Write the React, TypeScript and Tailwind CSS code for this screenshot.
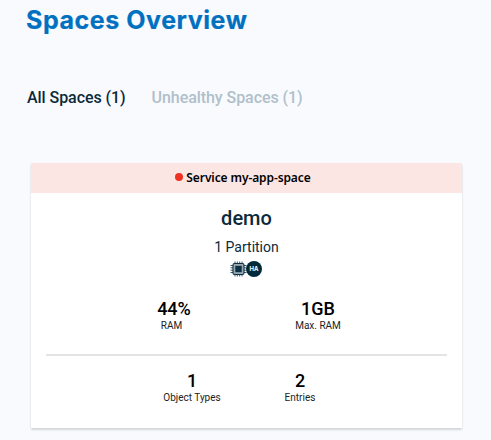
function ChipIcon() {
  return (
    <svg width="17" height="16" viewBox="0 0 17 16" fill="none" stroke="#0b3044">
      <path
        d="M5 .5v15M7.3 .5v15M9.7 .5v15M12 .5v15M.5 4.5h16M.5 6.8h16M.5 9.2h16M.5 11.5h16"
        strokeWidth="1"
        strokeOpacity="0.8"
      />
      <rect x="3" y="2.5" width="11" height="11" rx="1.5" fill="#9aabb5" strokeWidth="1.1" />
      <rect x="5.3" y="4.8" width="6.4" height="6.4" fill="#0b3044" stroke="none" />
    </svg>
  );
}

type StatProps = { value: string; label: string; className: string; labelClass?: string };

function Stat({ value, label, className, labelClass = "" }: StatProps) {
  return (
    <div className={`text-center whitespace-nowrap ${className}`}>
      <div className="text-[18px] leading-[20px] font-medium text-black">{value}</div>
      <div className={`mt-px text-[10px] leading-[12px] text-[#222] ${labelClass}`}>{label}</div>
    </div>
  );
}

export default function App() {
  return (
    <main className="h-[440px] w-[491px] overflow-hidden bg-[#f9fafe] font-['Roboto',sans-serif] text-[#0b2a3a]">
      <h1 className="pt-[4px] pl-[26px] font-['Inter',sans-serif] text-[25px] leading-[32px] font-bold tracking-[0.55px] whitespace-nowrap text-[#0070c0] [-webkit-text-stroke:0.2px]">
        Spaces Overview
      </h1>
      <nav className="mt-[52px] flex gap-[26px] pl-[27px] text-[16px] leading-[20px] font-medium tracking-[-0.06px] whitespace-nowrap">
        <span>All Spaces (1)</span>
        <span className="text-[#afc0ca]">Unhealthy Spaces (1)</span>
      </nav>
      <section className="mt-[55px] ml-[31px] h-[265px] w-[431px] bg-white shadow-[0_2px_2px_rgba(0,0,0,0.12),0_1px_2px_rgba(0,0,0,0.05)]">
        <header className="flex h-[30px] items-center justify-center gap-[3px] bg-[#fbe6e4] pr-[7px]">
          <span className="-mt-[2px] size-[8px] rounded-full bg-[#ee3224]" />
          <span className="font-['Noto_Sans',sans-serif] text-[12px] leading-[20px] font-semibold tracking-[-0.1px] text-black">
            Service my-app-space
          </span>
        </header>
        <h2 className="mt-[13px] text-center text-[20px] leading-[24px] font-medium">demo</h2>
        <p className="mt-[7px] text-center text-[14px] leading-[20px]">1 Partition</p>
        <div className="mt-[4px] flex items-center justify-center pr-px">
          <ChipIcon />
          <span className="-ml-px flex size-[16px] items-center justify-center rounded-full bg-[#00293a] font-['Inter',sans-serif] text-[6px] leading-none font-bold text-white">
            HA
          </span>
        </div>
        <div className="mt-[22px] flex">
          <Stat value="44%" label="RAM" className="ml-[103px] w-[80px]" labelClass="pr-[5px]" />
          <Stat value="1GB" label="Max. RAM" className="ml-[64px] w-[80px]" />
        </div>
        <hr className="mx-[15px] mt-[22px] border-0 border-t-2 border-[#e4e4e4]" />
        <div className="mt-[15px] flex">
          <Stat value="1" label="Object Types" className="ml-[121px] w-[80px]" />
          <Stat value="2" label="Entries" className="ml-[28px] w-[80px]" />
        </div>
      </section>
    </main>
  );
}
